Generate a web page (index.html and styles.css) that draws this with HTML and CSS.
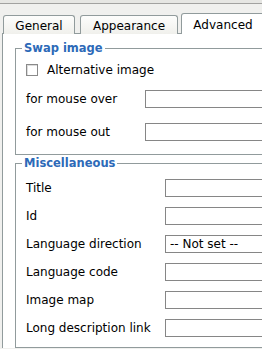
FILE: index.html
```html
<!DOCTYPE html>
<html lang="en">
<head>
	<meta charset="UTF-8">
	<title>Image properties</title>
	<link rel="stylesheet" href="styles.css">
</head>
<body>
	<div class="topline"></div>
	<!-- tabs -->
	<div class="tabs">
		<span class="tab tab-general">General</span>
		<span class="tab tab-appearance">Appearance</span>
		<span class="tab tab-advanced current">Advanced</span>
	</div>
	<!-- panel -->
	<div class="panel">
		<fieldset class="swap">
			<legend>Swap image</legend>
			<div class="check-row">
				<span class="checkbox"></span>
				<label>Alternative image</label>
			</div>
			<div class="row swap-row first">
				<label>for mouse over</label>
				<input type="text" class="field">
			</div>
			<div class="row swap-row">
				<label>for mouse out</label>
				<input type="text" class="field">
			</div>
		</fieldset>
		<fieldset class="misc">
			<legend>Miscellaneous</legend>
			<div class="row misc-row">
				<label>Title</label>
				<input type="text" class="field">
			</div>
			<div class="row misc-row">
				<label>Id</label>
				<input type="text" class="field">
			</div>
			<div class="row misc-row">
				<label>Language direction</label>
				<select class="field select">
					<option>-- Not set --</option>
				</select>
			</div>
			<div class="row misc-row">
				<label>Language code</label>
				<input type="text" class="field">
			</div>
			<div class="row misc-row">
				<label>Image map</label>
				<input type="text" class="field">
			</div>
			<div class="row misc-row">
				<label>Long description link</label>
				<input type="text" class="field">
			</div>
		</fieldset>
	</div>
</body>
</html>
```

FILE: styles.css
```css
* {
    padding: 0;
    margin: 0;
    box-sizing: border-box;
}

html, body {
    width: 262px;
    height: 349px;
    overflow: hidden;
}

body {
    background: #f0f0ee;
    font-family: "DejaVu Sans", Verdana, sans-serif;
    font-size: 12px;
    color: #000;
}

.topline {
    height: 4px;
    background: #e6e6e3;
    border-bottom: 1px solid #a2a2a0;
}

.tabs {
    display: flex;
    align-items: flex-end;
    width: 262px;
    height: 30px;
    padding-left: 3px;
    overflow: hidden;
    position: relative;
    z-index: 1;
    margin-bottom: -1px;
}

.tab {
    flex-shrink: 0;
    height: 19px;
    line-height: 17px;
    padding-top: 2px;
    text-align: center;
    border: 1px solid #919b9c;
    border-bottom: 0;
    border-radius: 3px 3px 0 0;
    background: linear-gradient(#fdfdfc, #f0f0ec);
    margin-right: 5px;
}

.tab-general {
    width: 72px;
}

.tab-appearance {
    width: 98px;
    margin-right: 3px;
}

.tab-advanced {
    width: 84px;
    margin-right: 0;
}

.tab.current {
    height: 21px;
    padding-top: 3px;
    background: #fff;
}

.panel {
    width: 260px;
    height: 315px;
    margin-left: 2px;
    background: #fff;
    border: 1px solid #919b9c;
    border-right: 0;
    border-bottom: 0;
    padding: 7px 0 0 12px;
    overflow: hidden;
}

fieldset {
    width: 300px;
    border: 1px solid #919b9c;
    padding: 0 6px 0 10px;
}

legend {
    color: #2d6ab8;
    font-weight: bold;
    font-size: 11.5px;
    line-height: 14px;
    padding: 0 2px;
    margin-left: -4px;
}

.swap {
    height: 114px;
}

.misc {
    margin-top: 1px;
    height: 192px;
}

.check-row {
    display: flex;
    align-items: center;
    height: 14px;
    margin-top: 8px;
}

.checkbox {
    width: 12px;
    height: 12px;
    border: 1px solid #8a8a8a;
    background: #fff;
    box-shadow: inset 1px 1px 0 #dcdcdc;
    margin-right: 9px;
}

.row {
    display: flex;
    align-items: center;
    height: 18px;
}

.swap-row.first {
    margin-top: 13px;
}

.swap-row + .swap-row {
    margin-top: 15px;
}

.swap-row label {
    width: 119px;
}

.misc-row {
    margin-top: 10px;
}

.misc-row:first-of-type {
    margin-top: 9px;
}

.misc-row label {
    width: 139px;
}

.field {
    width: 140px;
    height: 18px;
    border: 1px solid #868686;
    background: #fff;
    font-family: "DejaVu Sans", Verdana, sans-serif;
    font-size: 12px;
    color: #000;
    outline: none;
}

.select {
    -webkit-appearance: none;
    appearance: none;
    border-radius: 0;
    padding: 0 0 0 4px;
    line-height: 16px;
}
```
